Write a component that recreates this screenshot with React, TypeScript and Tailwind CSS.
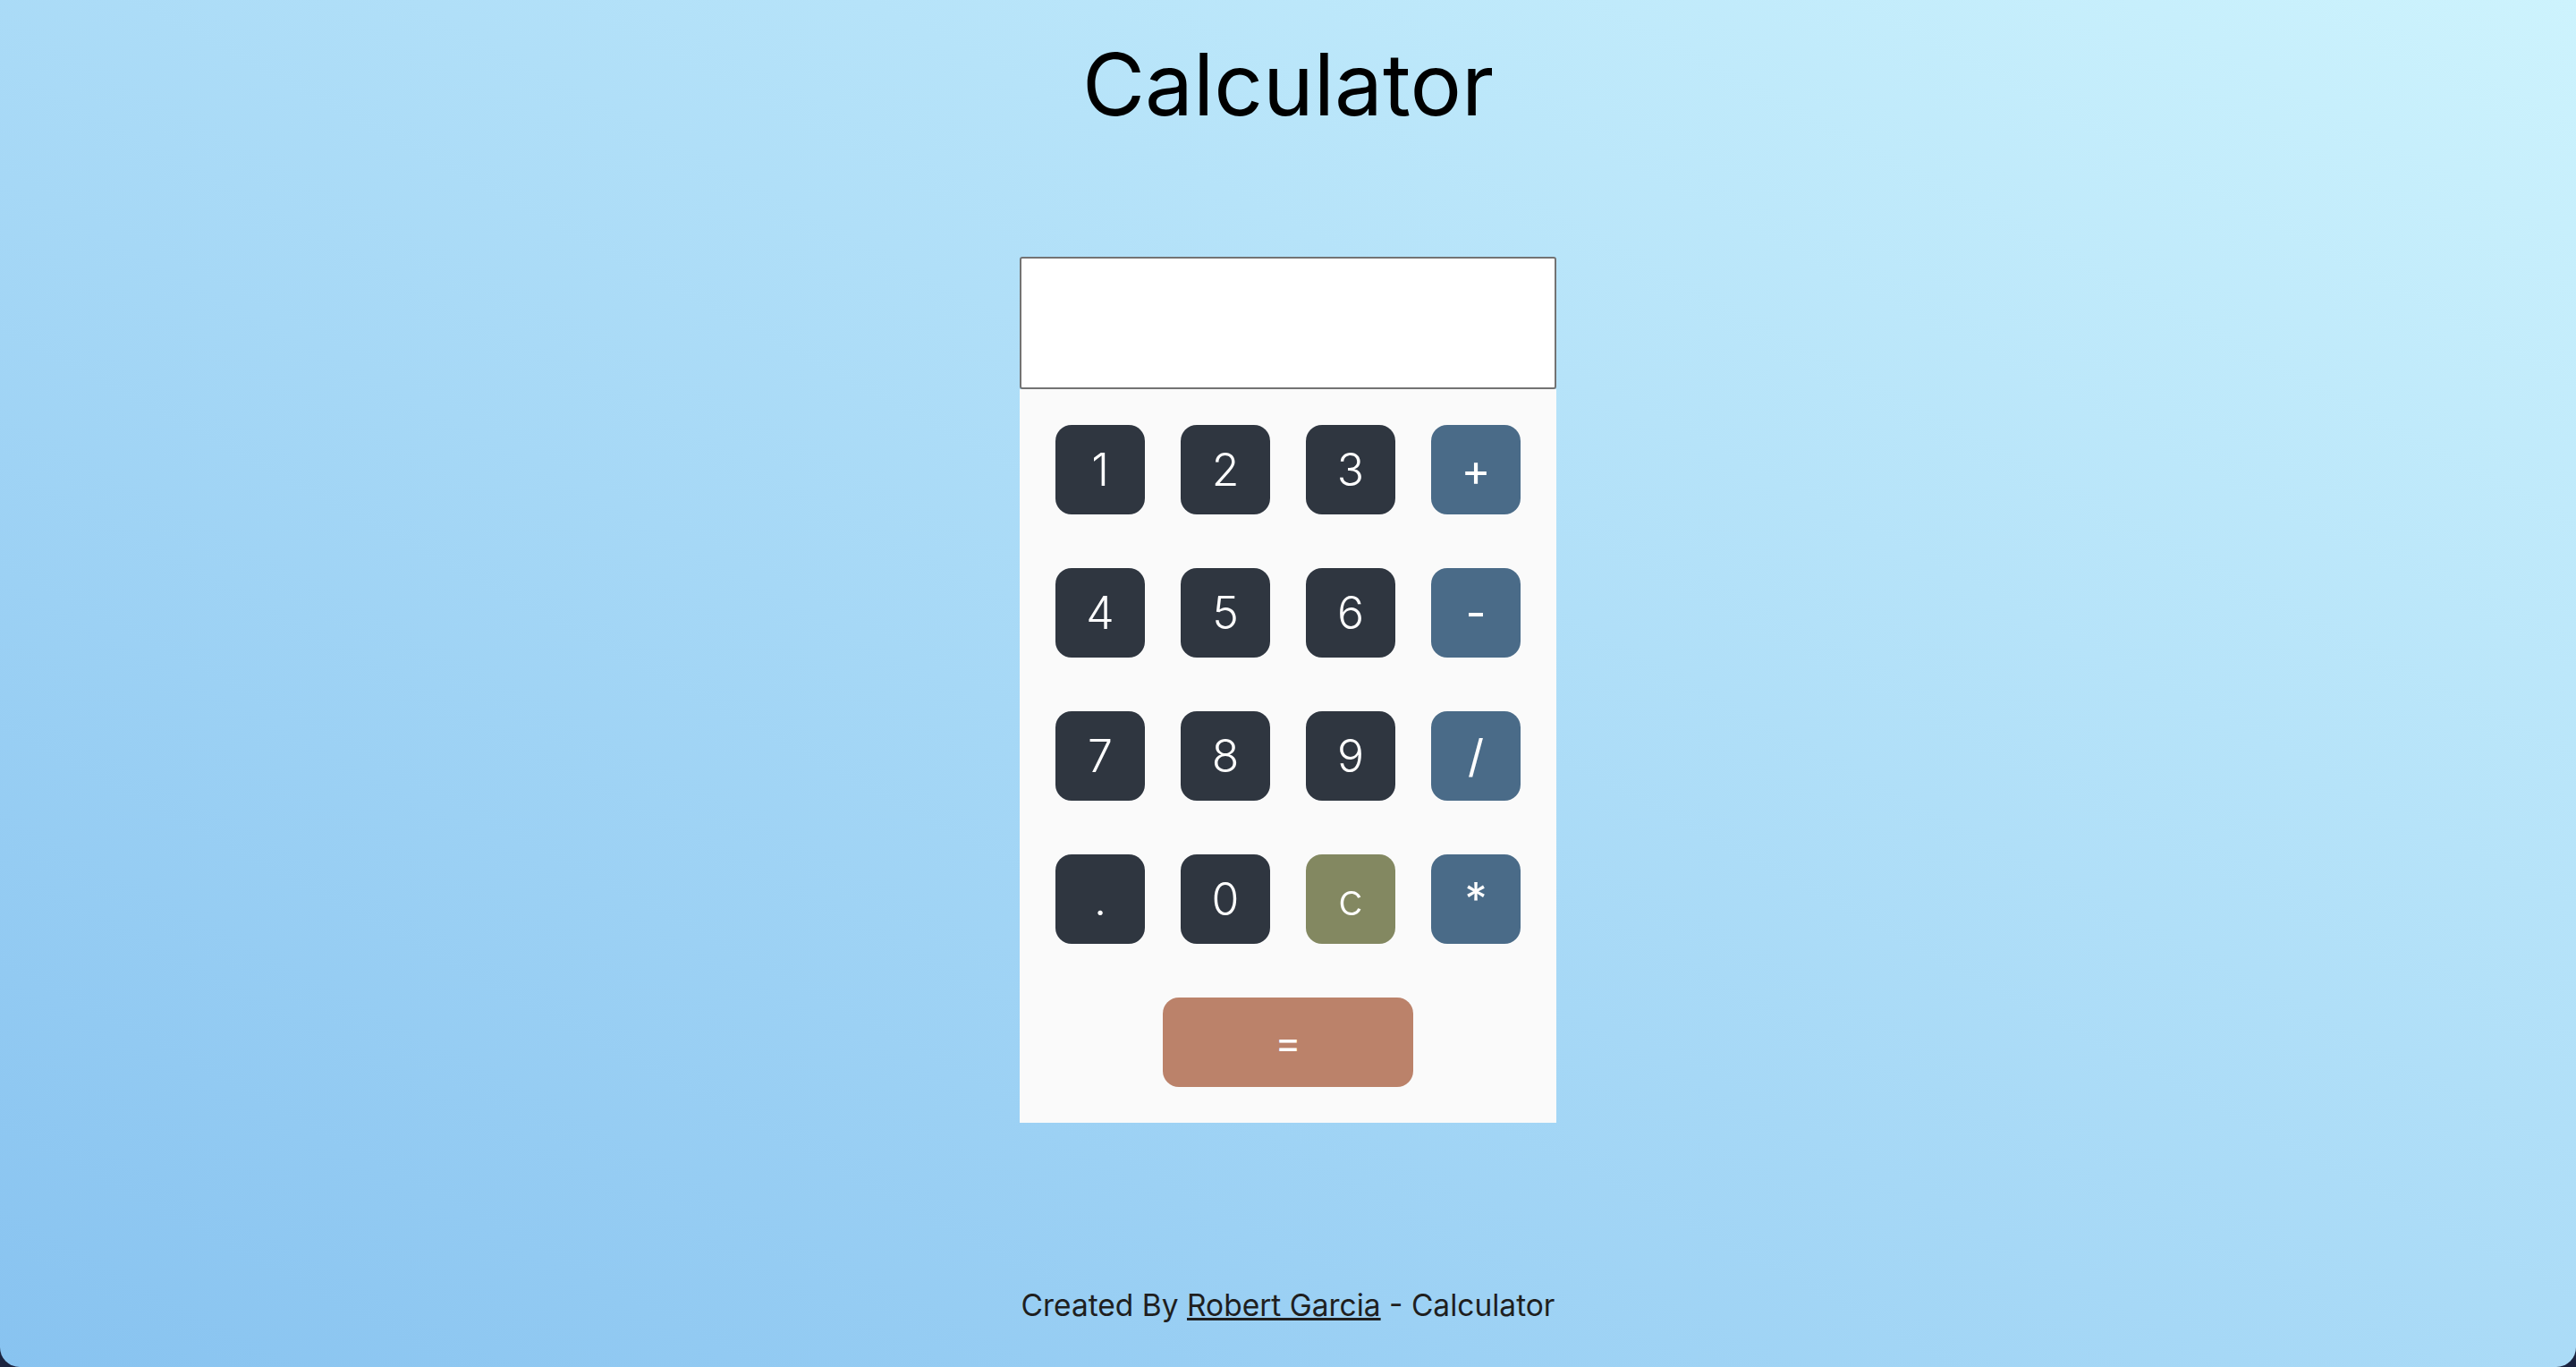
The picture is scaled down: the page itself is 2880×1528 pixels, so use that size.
import { useState } from 'react';

const KEYS: { label: string; kind: 'num' | 'op' | 'clear' }[] = [
  { label: '1', kind: 'num' },
  { label: '2', kind: 'num' },
  { label: '3', kind: 'num' },
  { label: '+', kind: 'op' },
  { label: '4', kind: 'num' },
  { label: '5', kind: 'num' },
  { label: '6', kind: 'num' },
  { label: '-', kind: 'op' },
  { label: '7', kind: 'num' },
  { label: '8', kind: 'num' },
  { label: '9', kind: 'num' },
  { label: '/', kind: 'op' },
  { label: '.', kind: 'num' },
  { label: '0', kind: 'num' },
  { label: 'c', kind: 'clear' },
  { label: '*', kind: 'op' },
];

export default function App() {
  const [value, setValue] = useState('');

  const press = (label: string) => {
    if (label === 'c') return setValue('');
    setValue(value + label);
  };

  const evaluate = () => {
    try {
      // eslint-disable-next-line no-new-func
      setValue(String(Function(`return (${value || 0})`)()));
    } catch {
      setValue('Error');
    }
  };

  return (
    <div className="min-h-screen bg-[#1b2440] font-['Inter','Open_Sans',sans-serif]">
      <div className="h-[1528px] rounded-b-[22px] bg-gradient-to-tr from-[#88c3f0] to-[#cdf3fd] flex flex-col items-center">
        {/* Title */}
        <h1 className="mt-[46px] text-[96px] leading-[96px] font-normal text-black">Calculator</h1>

        {/* Calculator */}
        <div className="mt-[145px] w-[600px]">
          <input
            value={value}
            readOnly
            className="block w-full h-[148px] bg-white border-2 border-[#737373] rounded-[3px] px-5 text-right text-[56px] text-[#2f3640] outline-none"
          />
          <div className="bg-[#fafafa] p-[40px]">
            <div className="grid grid-cols-4 gap-x-[40px] gap-y-[60px]">
              {KEYS.map(k => (
                <button
                  key={k.label}
                  onClick={() => press(k.label)}
                  className={`h-[100px] w-[100px] rounded-[18px] text-white text-[50px] leading-none flex items-center justify-center ${
                    k.kind === 'num'
                      ? 'bg-[#2f3640] font-light'
                      : k.kind === 'op'
                      ? 'bg-[#4a6b88] font-normal'
                      : 'bg-[#838861] font-light'
                  }`}
                >
                  {k.label}
                </button>
              ))}
            </div>
            <button
              onClick={evaluate}
              className="mt-[60px] mx-auto block h-[100px] w-[280px] rounded-[18px] bg-[#bb826a] text-white text-[44px] font-normal"
            >
              =
            </button>
          </div>
        </div>

        {/* Footer */}
        <p className="mt-[180px] text-[33.5px] leading-[48px] text-[#1f1f1f]">
          Created By <a href="#" className="underline">Robert Garcia</a> - Calculator
        </p>
      </div>
    </div>
  );
}
